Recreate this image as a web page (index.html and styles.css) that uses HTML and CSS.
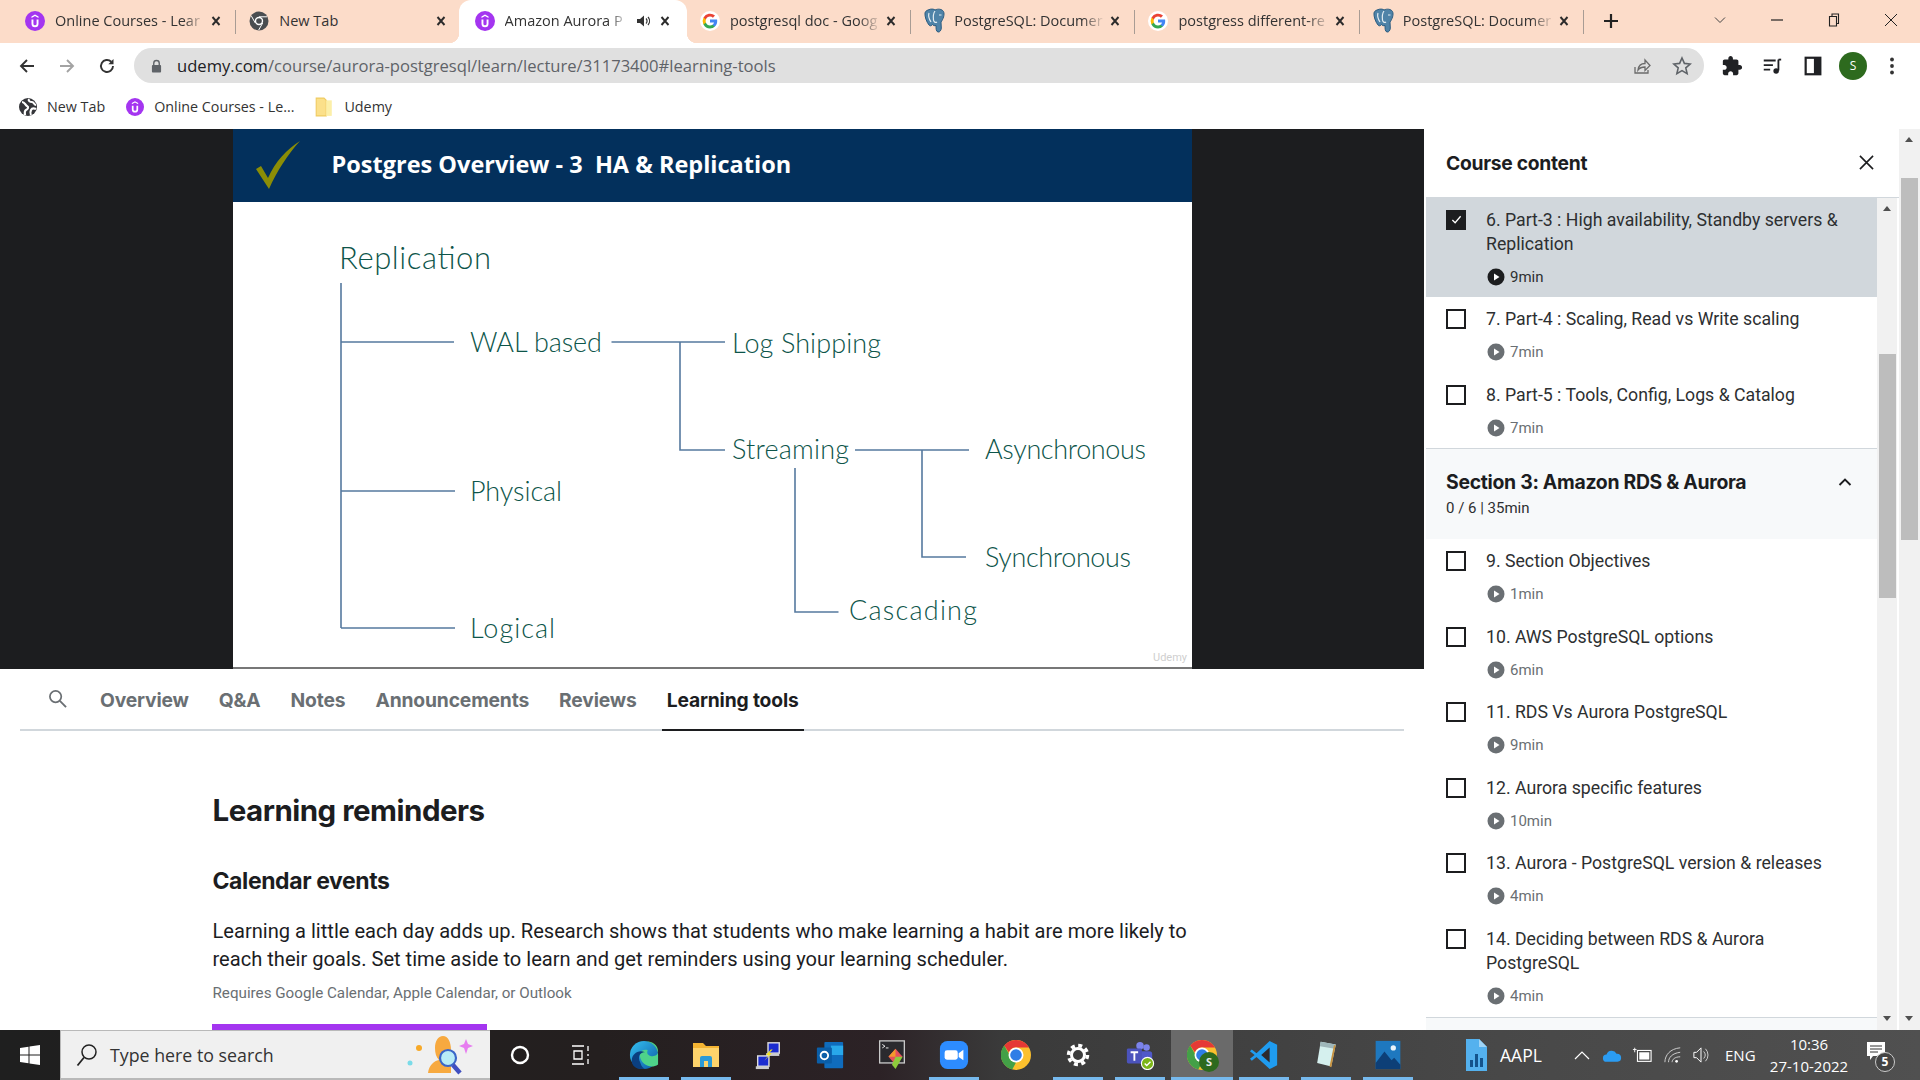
FILE: index.html
```html
<!DOCTYPE html>
<html lang="en">
<head>
<meta charset="utf-8">
<title>Amazon Aurora PostgreSQL</title>
<link rel="stylesheet" href="styles.css">
</head>
<body>
<svg class="sprites" width="0" height="0" aria-hidden="true">
  <symbol id="i-udemy" viewBox="0 0 20 20"><circle cx="10" cy="10" r="10" fill="#a435f0"/><path d="M6.500 8.500v4.200a3.500 3.500 0 0 0 7 0V8.500h-1.900v4.200a1.600 1.600 0 0 1-3.200 0V8.500z" fill="#fff"/><path d="M10 3.600l3.500 2v1.300L10 5 6.500 6.900V5.600z" fill="#fff"/></symbol>
  <symbol id="i-google" viewBox="0 0 20 20"><circle cx="10" cy="10" r="10" fill="#fff"/><path d="M17.200 10.200c0-.6-.05-1.100-.15-1.600H10v3h4a3.400 3.400 0 0 1-1.500 2.200v1.800h2.400c1.400-1.200 2.300-3.100 2.300-5.400z" fill="#4285f4"/><path d="M10 17.500c2 0 3.700-.65 4.900-1.900l-2.400-1.800c-.65.450-1.500.7-2.500.7-1.900 0-3.500-1.250-4.100-3H3.500v1.900A7.400 7.400 0 0 0 10 17.500z" fill="#34a853"/><path d="M5.900 11.500a4.400 4.400 0 0 1 0-3V6.600H3.500a7.400 7.400 0 0 0 0 6.800z" fill="#fbbc05"/><path d="M10 5.500c1.100 0 2.100.4 2.900 1.150l2.100-2.100A7.400 7.400 0 0 0 3.500 6.600l2.400 1.900c.6-1.750 2.200-3 4.100-3z" fill="#ea4335"/></symbol>
  <symbol id="i-pg" viewBox="0 0 22 26"><path d="M4 2c3-1.500 6-1 7 0 3-1.500 7-1 8.500 1.500 1.500 3-.5 8-2.500 10.500l.3 6c0 2-1.500 4.500-3.300 4-2-.5-2-3.500-2-6.500-1.500.5-3 0-3.500-1-1 1.500-2.500 1.800-3.500.5C2.500 14 .5 8 1 5c.2-1.400 1.500-2.500 3-3z" fill="#4f83a8" stroke="#2c5c80" stroke-width="1"/><path d="M11 3c-1.500 2-2 5-1.500 9 .2 2 2 3 3.500 2M15 7h2.500M5 5c-1 3 0 6 2 9" stroke="#e4edf2" stroke-width="1.200" fill="none"/></symbol>
  <symbol id="i-x" viewBox="0 0 10 10"><path d="M1.500 1l7 8M8.500 1l-7 8" stroke="#2b2b2b" stroke-width="1.900" fill="none"/></symbol>
  <symbol id="i-play" viewBox="0 0 18 18"><circle cx="9" cy="9" r="8.500" fill="currentColor"/><path d="M7 5.500l5.500 3.500L7 12.500z" fill="#fff"/></symbol>
  <symbol id="i-chrome" viewBox="0 0 32 32"><circle cx="16" cy="16" r="16" fill="#fbc02d"/><path d="M16 0a16 16 0 0 1 13.900 8H16a8 8 0 0 0-7.500 5.200L3.400 5.900A16 16 0 0 1 16 0z" fill="#e53935"/><path d="M3.400 5.900l6.900 11.900a6 6 0 0 0 5.700 6.200L12 31.500A16 16 0 0 1 3.400 5.900z" fill="#43a047"/><circle cx="16" cy="16" r="8" fill="#fff"/><circle cx="16" cy="16" r="6.200" fill="#2f7ee6"/></symbol>
</svg>

<div class="screen">
  <header class="tabstrip">
    <div class="tab"><svg class="fav"><use href="#i-udemy"/></svg><span class="tab-title">Online Courses - Lear</span><svg class="tab-x"><use href="#i-x"/></svg></div>
    <div class="tab tab-presep"><svg class="fav" viewBox="0 0 20 20"><circle cx="10" cy="10" r="9.500" fill="#4a4d50"/><circle cx="10" cy="10" r="4.200" fill="#fff"/><circle cx="10" cy="10" r="2.800" fill="#4a4d50"/><path d="M10 5.800h8M6.300 12l-3.900-6.900M13.700 12l-4 7" stroke="#fff" stroke-width="1"/></svg><span class="tab-title tab-title-full">New Tab</span><svg class="tab-x"><use href="#i-x"/></svg></div>
    <div class="tab tab-active"><svg class="fav"><use href="#i-udemy"/></svg><span class="tab-title">Amazon Aurora P</span><svg class="tab-audio" viewBox="0 0 14 12"><path d="M1 4h3l4-3.500v11L4 8H1z" fill="#333"/><path d="M10 3.500a3.500 3.500 0 0 1 0 5M12 2a6 6 0 0 1 0 8" stroke="#333" stroke-width="1.200" fill="none"/></svg><svg class="tab-x"><use href="#i-x"/></svg></div>
    <div class="tab"><svg class="fav"><use href="#i-google"/></svg><span class="tab-title">postgresql doc - Goog</span><svg class="tab-x"><use href="#i-x"/></svg></div>
    <div class="tab"><svg class="fav fav-pg"><use href="#i-pg"/></svg><span class="tab-title">PostgreSQL: Documer</span><svg class="tab-x"><use href="#i-x"/></svg></div>
    <div class="tab"><svg class="fav"><use href="#i-google"/></svg><span class="tab-title">postgress different-re</span><svg class="tab-x"><use href="#i-x"/></svg></div>
    <div class="tab"><svg class="fav fav-pg"><use href="#i-pg"/></svg><span class="tab-title">PostgreSQL: Documer</span><svg class="tab-x"><use href="#i-x"/></svg></div>
    <svg class="tab-new" viewBox="0 0 16 16"><path d="M8 1v14M1 8h14" stroke="#222" stroke-width="2.200"/></svg>
    <div class="win-controls">
      <svg class="win-icon" viewBox="0 0 14 14"><path d="M2 4.500l5 5 5-5" stroke="#444" fill="none"/></svg>
      <svg class="win-icon" viewBox="0 0 14 14"><path d="M1 7h12" stroke="#222" stroke-width="1.200"/></svg>
      <svg class="win-icon" viewBox="0 0 14 14"><path d="M2.500 3.500h7v9.500h-7zM5 3.500V1h6.500v9.500H9.500" stroke="#222" stroke-width="1.100" fill="none"/></svg>
      <svg class="win-icon" viewBox="0 0 14 14"><path d="M1 1l12 12M13 1L1 13" stroke="#222" stroke-width="1"/></svg>
    </div>
  </header>

  <div class="toolbar">
    <svg class="tool" viewBox="0 0 18 18"><path d="M16 9H3M9 3L3 9l6 6" stroke="#333" stroke-width="1.900" fill="none"/></svg>
    <svg class="tool" viewBox="0 0 18 18"><path d="M2 9h13M9 3l6 6-6 6" stroke="#a3a3a3" stroke-width="1.900" fill="none"/></svg>
    <svg class="tool" viewBox="0 0 18 18"><path d="M15 9a6 6 0 1 1-1.800-4.300" stroke="#333" stroke-width="1.900" fill="none"/><path d="M15.500 2v5.200h-5.200z" fill="#333"/></svg>
    <div class="omnibox">
      <svg class="lock" viewBox="0 0 12 14"><path d="M3 6V4a3 3 0 0 1 6 0v2" stroke="#5f6368" stroke-width="1.500" fill="none"/><rect x="1" y="6" width="10" height="8" rx="1" fill="#5f6368"/></svg>
      <span class="url"><b class="url-host">udemy.com</b>/course/aurora-postgresql/learn/lecture/31173400#learning-tools</span>
      <svg class="omni-icon" viewBox="0 0 20 20"><path d="M3 11v6h13v-3" stroke="#6b6b6b" stroke-width="1.300" fill="none"/><path d="M6 14c.5-4 3-6.500 7-6.500V4l5 5.500-5 5V11c-3 0-5.500 1-7 3z" stroke="#6b6b6b" stroke-width="1.300" fill="none"/></svg>
      <svg class="omni-icon" viewBox="0 0 20 20"><path d="M10 2l2.400 5.400 5.800.6-4.400 3.900 1.300 5.700-5.100-3-5.100 3 1.300-5.700L1.800 8l5.800-.6z" stroke="#5f6368" stroke-width="1.600" fill="none"/></svg>
    </div>
    <svg class="ext ext-first" viewBox="0 0 24 24"><path fill="#202124" d="M20.500 11H19V7c0-1.100-.9-2-2-2h-4V3.500C13 2.120 11.880 1 10.500 1S8 2.120 8 3.500V5H4c-1.100 0-1.990.9-1.990 2v3.800H3.500c1.490 0 2.700 1.210 2.700 2.700s-1.210 2.700-2.700 2.700H2V20c0 1.100.9 2 2 2h3.800v-1.500c0-1.490 1.210-2.700 2.700-2.700 1.490 0 2.700 1.210 2.700 2.700V22H17c1.100 0 2-.9 2-2v-4h1.500c1.380 0 2.500-1.120 2.500-2.500S21.880 11 20.500 11z"/></svg>
    <svg class="ext" viewBox="0 0 24 24"><path d="M3 6h13M3 11h10M3 16h7" stroke="#202124" stroke-width="2"/><path d="M19 5v12" stroke="#202124" stroke-width="2"/><circle cx="16.500" cy="17.500" r="3" fill="#202124"/><path d="M19 5h3" stroke="#202124" stroke-width="2"/></svg>
    <svg class="ext ext-panel" viewBox="0 0 24 24"><rect x="4" y="3" width="16" height="18" fill="none" stroke="#202124" stroke-width="2.400"/><rect x="13" y="3" width="7" height="18" fill="#202124"/></svg>
    <span class="avatar">S</span>
    <svg class="ext ext-dots" viewBox="0 0 6 20"><circle cx="3" cy="3.500" r="1.900" fill="#333"/><circle cx="3" cy="10" r="1.900" fill="#333"/><circle cx="3" cy="16.500" r="1.900" fill="#333"/></svg>
  </div>

  <nav class="bookmarks">
    <span class="bm"><svg class="bm-icon" viewBox="0 0 18 18"><circle cx="9" cy="9" r="9" fill="#35363a"/><path d="M3 4c3 0 3 3 5 4s1 3-1 4-1 4-1 5M10 1c-1 2 1 3 3 3s2 3 4 3M17 11c-2-1-4-1-5 1s-1 3 0 5" stroke="#fff" stroke-width="2.200" fill="none"/></svg>New Tab</span>
    <span class="bm"><svg class="bm-icon"><use href="#i-udemy"/></svg>Online Courses - Le...</span>
    <span class="bm"><svg class="bm-icon bm-folder" viewBox="0 0 16 18"><path d="M1 1h7l2 2v14H1z" fill="#fbe08a" stroke="#f0cb62"/><path d="M10 3h5v14h-5z" fill="#fcefa8"/></svg>Udemy</span>
  </nav>

  <main class="page">
    <div class="course">
      <section class="video">
        <div class="slide">
          <div class="slide-head">
            <svg class="slide-check" viewBox="0 0 46 50"><path d="M1 29l5-3 7 12C20 22 32 9 45 1 33 14 22 31 14 49z" fill="#8b8d06"/></svg>
            <h2 class="slide-title">Postgres Overview - 3&nbsp; HA &amp; Replication</h2>
          </div>
          <svg class="diagram" viewBox="233 202 959 465">
            <g class="tree">
              <path d="M341 283V628M341 342h113M341 491h114M341 628h114"/>
              <path d="M611.500 342H725M680 342V450H725"/>
              <path d="M855 450H969M922 450V557H966"/>
              <path d="M795 468V612H838.500"/>
            </g>
            <g class="labels">
              <text x="339" y="269" textLength="152" class="lbl-lg">Replication</text>
              <text x="470" y="352" textLength="132">WAL based</text>
              <text x="732" y="353" textLength="149">Log Shipping</text>
              <text x="732" y="459" textLength="117">Streaming</text>
              <text x="985" y="459" textLength="161">Asynchronous</text>
              <text x="470" y="501" textLength="92">Physical</text>
              <text x="985" y="567" textLength="146">Synchronous</text>
              <text x="849" y="620" textLength="128">Cascading</text>
              <text x="470" y="638" textLength="85">Logical</text>
            </g>
            <text x="1153" y="661" class="watermark">Udemy</text>
          </svg>
        </div>
      </section>

      <div class="tabs-nav">
        <svg class="nav-search" viewBox="0 0 20 20"><circle cx="8" cy="8" r="6" fill="none" stroke="#6a6f73" stroke-width="1.800"/><path d="M12.500 12.500L19 19" stroke="#6a6f73" stroke-width="2"/></svg>
        <span class="nav-tab">Overview</span>
        <span class="nav-tab">Q&amp;A</span>
        <span class="nav-tab">Notes</span>
        <span class="nav-tab">Announcements</span>
        <span class="nav-tab">Reviews</span>
        <span class="nav-tab nav-tab-active">Learning tools</span>
      </div>

      <article class="tools">
        <h1 class="tools-h1">Learning reminders</h1>
        <h3 class="tools-h3">Calendar events</h3>
        <p class="tools-p">Learning a little each day adds up. Research shows that students who make learning a habit are more likely to reach their goals. Set time aside to learn and get reminders using your learning scheduler.</p>
        <p class="tools-note">Requires Google Calendar, Apple Calendar, or Outlook</p>
        <div class="tools-btn"></div>
      </article>
    </div>

    <aside class="sidebar">
      <div class="side-head">
        <span class="side-title">Course content</span>
        <svg class="side-close" viewBox="0 0 16 16"><path d="M1 1l14 14M15 1L1 15" stroke="#1c1d1f" stroke-width="1.700"/></svg>
      </div>
      <div class="side-body">
        <div class="list">
          <div class="item item-current">
            <span class="box box-checked"><svg viewBox="0 0 12 12"><path d="M1.500 6.500l3 3 6-7" stroke="#fff" stroke-width="1.400" fill="none"/></svg></span>
            <div class="item-main"><div class="item-title">6. Part-3 : High availability, Standby servers &amp; Replication</div><div class="item-meta"><svg class="play"><use href="#i-play"/></svg>9min</div></div>
          </div>
          <div class="item"><span class="box"></span><div class="item-main"><div class="item-title">7. Part-4 : Scaling, Read vs Write scaling</div><div class="item-meta"><svg class="play"><use href="#i-play"/></svg>7min</div></div></div>
          <div class="item"><span class="box"></span><div class="item-main"><div class="item-title">8. Part-5 : Tools, Config, Logs &amp; Catalog</div><div class="item-meta"><svg class="play"><use href="#i-play"/></svg>7min</div></div></div>
          <div class="section">
            <div class="section-row"><span class="section-title">Section 3: Amazon RDS &amp; Aurora</span><svg class="section-chev" viewBox="0 0 14 10"><path d="M1.500 8L7 2.500 12.500 8" stroke="#1c1d1f" stroke-width="1.900" fill="none"/></svg></div>
            <div class="section-sub">0 / 6 | 35min</div>
          </div>
          <div class="item"><span class="box"></span><div class="item-main"><div class="item-title">9. Section Objectives</div><div class="item-meta"><svg class="play"><use href="#i-play"/></svg>1min</div></div></div>
          <div class="item"><span class="box"></span><div class="item-main"><div class="item-title">10. AWS PostgreSQL options</div><div class="item-meta"><svg class="play"><use href="#i-play"/></svg>6min</div></div></div>
          <div class="item"><span class="box"></span><div class="item-main"><div class="item-title">11. RDS Vs Aurora PostgreSQL</div><div class="item-meta"><svg class="play"><use href="#i-play"/></svg>9min</div></div></div>
          <div class="item"><span class="box"></span><div class="item-main"><div class="item-title">12. Aurora specific features</div><div class="item-meta"><svg class="play"><use href="#i-play"/></svg>10min</div></div></div>
          <div class="item"><span class="box"></span><div class="item-main"><div class="item-title">13. Aurora - PostgreSQL version &amp; releases</div><div class="item-meta"><svg class="play"><use href="#i-play"/></svg>4min</div></div></div>
          <div class="item"><span class="box"></span><div class="item-main"><div class="item-title">14. Deciding between RDS &amp; Aurora PostgreSQL</div><div class="item-meta"><svg class="play"><use href="#i-play"/></svg>4min</div></div></div>
          <div class="section section-stub"></div>
        </div>
        <div class="scroll scroll-inner">
          <span class="arrow arrow-up"></span>
          <span class="thumb thumb-inner"></span>
          <span class="arrow arrow-down"></span>
        </div>
      </div>
    </aside>

    <div class="scroll scroll-page">
      <span class="arrow arrow-up"></span>
      <span class="thumb thumb-page"></span>
      <span class="arrow arrow-down"></span>
    </div>
  </main>

  <footer class="taskbar">
    <div class="start"><svg viewBox="0 0 20 20" class="start-logo"><path d="M0 3l8.500-1.300v7.800H0zM9.500 1.500L20 0v9.500H9.500zM0 10.500h8.500v7.800L0 17zM9.500 10.500H20V20L9.500 18.500z" fill="#fff"/></svg></div>
    <div class="search">
      <svg class="search-mag" viewBox="0 0 22 24"><circle cx="13" cy="9" r="7" fill="none" stroke="#222" stroke-width="1.500"/><path d="M8 14.500L1.500 22.500" stroke="#222" stroke-width="1.700"/></svg>
      <span class="search-text">Type here to search</span>
      <svg class="search-art" viewBox="0 0 70 40"><circle cx="4" cy="28" r="2.500" fill="#7adbe8"/><circle cx="13" cy="13" r="3" fill="#f7a928"/><path d="M22 38c1-8 6-12 11-13-3-3-4-7-4-12 0-7 3-12 8-12s8 6 8 14v23z" fill="#f7a93f"/><circle cx="42" cy="23" r="8" fill="#b8ecf7" stroke="#3a66c8" stroke-width="2.200"/><path d="M47 30l7 8" stroke="#3f4fc0" stroke-width="4.500"/><path d="M60 4l2 5 5 2-5 2-2 6-2-6-5-2 5-2z" fill="#e77df0"/></svg>
    </div>
    <div class="slot slot-cortana"><svg class="task-icon" viewBox="0 0 24 24"><circle cx="12" cy="12" r="8" fill="none" stroke="#fff" stroke-width="2.400"/></svg></div>
    <div class="slot"><svg class="task-icon" viewBox="0 0 24 24"><path d="M2 3h12M2 21h12M4 8h8v8H4zM18 3v5M18 11v2M18 16v5" stroke="#fff" stroke-width="1.300" fill="none"/></svg></div>
    <div class="slot slot-open"><svg class="task-icon task-big" viewBox="0 0 32 32"><defs><linearGradient id="edge" x1="0" y1="0" x2="1" y2="1"><stop offset="0" stop-color="#35c1f1"/><stop offset="1" stop-color="#0c59a4"/></linearGradient></defs><circle cx="16" cy="16" r="15" fill="url(#edge)"/><path d="M31 16c0-8-7-15-15-15 9 0 15 4 15 11 0 4-4 6-8 5s-4-4-3-6c-5-2-10 2-8 8 2 8 12 12 19 7 0-1 0-7 0-10z" fill="#4ed38a"/><path d="M12 24c-3-5-1-11 5-11-7-3-14 2-14 9s8 11 14 8c-3 0-4-3-5-6z" fill="#0b3f7f"/></svg></div>
    <div class="slot slot-open"><svg class="task-icon task-big" viewBox="0 0 30 30"><path d="M2 3h10l3 3h13v21H2z" fill="#f4b432"/><rect x="2" y="8" width="26" height="19" fill="#fdd36b"/><path d="M9 27v-9a2 2 0 0 1 2-2h8a2 2 0 0 1 2 2v9h-4v-6h-4v6z" fill="#2b9ad6"/></svg></div>
    <div class="slot"><svg class="task-icon task-big" viewBox="0 0 30 32"><rect x="15" y="3" width="12" height="11" fill="#1b2cd0" stroke="#ddd" stroke-width="1.500"/><rect x="13" y="14" width="14" height="3" fill="#ccc"/><rect x="4" y="17" width="12" height="11" fill="#1b2cd0" stroke="#ddd" stroke-width="1.500"/><rect x="2" y="28" width="14" height="3" fill="#ccc"/><path d="M18 10l-5 6h3l-5 6 8-8h-3l4-4z" fill="#f6e71b"/></svg></div>
    <div class="slot"><svg class="task-icon task-big" viewBox="0 0 32 32"><rect x="10" y="2" width="20" height="28" rx="1" fill="#0f6cbd"/><rect x="17" y="6" width="13" height="10" fill="#28a8ea"/><rect x="2" y="8" width="16" height="17" rx="1" fill="#0a5ea8"/><circle cx="10" cy="16.500" r="4" fill="none" stroke="#fff" stroke-width="2"/></svg></div>
    <div class="slot"><svg class="task-icon task-big" viewBox="0 0 30 34"><rect x="1" y="1" width="28" height="25" fill="#2a2a2e" stroke="#c9c9c9" stroke-width="1.500"/><path d="M4 5l3 2-3 2M8 9h3" stroke="#fff" fill="none"/><path d="M19 10l8 9-8 9-8-9z" fill="#e8505b"/><path d="M19 19h8l-8 14-4-5z" fill="#8ecb3c"/><path d="M11 19l8-9v9z" fill="#f39a2c"/></svg></div>
    <div class="slot slot-open"><svg class="task-icon task-big" viewBox="0 0 32 32"><rect x="1" y="1" width="30" height="30" rx="8" fill="#2d8cff"/><rect x="6" y="11" width="14" height="10" rx="2.500" fill="#fff"/><path d="M21 14l5-3.500v11L21 18z" fill="#fff"/></svg></div>
    <div class="slot"><svg class="task-icon task-big"><use href="#i-chrome"/></svg></div>
    <div class="slot slot-open"><svg class="task-icon" viewBox="0 0 24 24"><circle cx="12" cy="12" r="6.500" fill="none" stroke="#fff" stroke-width="3"/><circle cx="12" cy="12" r="9.500" fill="none" stroke="#fff" stroke-width="3.500" stroke-dasharray="4 3.450"/></svg></div>
    <div class="slot slot-open"><svg class="task-icon task-big" viewBox="0 0 32 32"><circle cx="23" cy="8" r="3.500" fill="#7b83eb"/><circle cx="16" cy="6" r="4" fill="#7b83eb"/><rect x="15" y="12" width="14" height="13" rx="3" fill="#5059c9"/><rect x="2" y="9" width="16" height="16" rx="1.500" fill="#4b53bc"/><path d="M6 13h8M10 13v9" stroke="#fff" stroke-width="2"/><circle cx="24" cy="25" r="6.500" fill="#7cb518" stroke="#fff" stroke-width="1.200"/><path d="M21 25l2.200 2.200 4-4" stroke="#fff" stroke-width="1.500" fill="none"/></svg></div>
    <div class="slot slot-open slot-active"><svg class="task-icon task-big chrome-user"><use href="#i-chrome"/></svg><span class="chrome-badge">S</span></div>
    <div class="slot slot-open"><svg class="task-icon task-big" viewBox="0 0 32 32"><path d="M22 1l8 4v22l-8 4L8 18l-5 4-2-2 5-4-5-4 2-2 5 4z" fill="#1f9cf0"/><path d="M22 8v16l-9-8z" fill="#2d2a2e"/></svg></div>
    <div class="slot slot-open"><svg class="task-icon task-big" viewBox="0 0 30 34"><path d="M9 2l17 3-5 25-16-4z" fill="#d5f0ee"/><path d="M9 2l17 3-1 5-17-3z" fill="#9fb7ba"/><path d="M24 6h2l-5 25-2-1z" fill="#c8923e"/></svg></div>
    <div class="slot slot-open"><svg class="task-icon task-big" viewBox="0 0 30 34"><rect x="1" y="1" width="28" height="32" fill="#1e78bf"/><circle cx="21" cy="9" r="3" fill="#e8f4fb"/><path d="M1 26l10-13 8 10 3-3 7 8v5H1z" fill="#0d3f77"/></svg></div>
    <div class="tray">
      <svg class="tray-doc" viewBox="0 0 24 34"><path d="M2 1h13l8 8v24H2z" fill="#54b1ee"/><path d="M15 1l8 8h-8z" fill="#9fd4f6"/><path d="M6 29v-7h3v7zM11 29V16h3v13zM16 29v-9h3v9z" fill="#14538c"/></svg>
      <span class="tray-ticker">AAPL</span>
      <svg class="tray-caret" viewBox="0 0 16 10"><path d="M1 9l7-7 7 7" stroke="#fff" stroke-width="1.200" fill="none"/></svg>
      <svg class="tray-icon tray-cloud" viewBox="0 0 22 16"><path d="M5 15a4 4 0 0 1 0-8 6 6 0 0 1 11-1 4.500 4.500 0 0 1 1 9z" fill="#2b9cf2"/></svg>
      <svg class="tray-icon tray-batt" viewBox="0 0 22 18"><rect x="6" y="4" width="15" height="12" fill="none" stroke="#fff" stroke-width="1.200"/><rect x="8" y="6" width="11" height="8" fill="#fff"/><path d="M1 3h4M3 1v5" stroke="#fff"/></svg>
      <svg class="tray-icon tray-wifi" viewBox="0 0 20 18"><path d="M1 17C1 9 7 2 18 1M5 17c0-5 4-10 13-11M9 17c0-3 3-6 9-6" stroke="#ccc" stroke-width="1.100" fill="none"/><circle cx="14" cy="16" r="1.500" fill="#fff"/></svg>
      <svg class="tray-icon tray-speaker" viewBox="0 0 18 20"><path d="M1 7h3l5-5v16l-5-5H1z" fill="none" stroke="#fff" stroke-width="1.100"/><path d="M12 6a6 6 0 0 1 0 8M14 3a10 10 0 0 1 0 14" stroke="#ddd" fill="none"/></svg>
      <span class="tray-lang">ENG</span>
      <span class="clock"><span>10:36</span><span>27-10-2022</span></span>
      <span class="notify"><svg viewBox="0 0 20 20" class="notify-icon"><path d="M1 1h18v14H7l-3 4v-4H1z" fill="#fff"/><path d="M4 5h12M4 8h12M4 11h8" stroke="#333"/></svg><span class="notify-count">5</span></span>
    </div>
  </footer>
</div>
</body>
</html>
```

FILE: styles.css
```css
* { box-sizing: border-box; }
html, body { margin: 0; padding: 0; height: 100%; overflow: hidden; }
body { font-family: "Roboto", "Liberation Sans", sans-serif; color: #1c1d1f; background: #fff; }
.sprites { display: none; }
.screen { width: 1920px; height: 1080px; display: flex; flex-direction: column; overflow: hidden; }

/* Browser tabs */
.tabstrip { height: 43px; flex: none; display: flex; align-items: stretch; padding-left: 12px; background: #fcdcc9; }
.tab { position: relative; width: 224.3px; flex: none; display: flex; align-items: center; padding: 0 15px 2px 13px; }
.tab::after { content: ""; position: absolute; right: 0; top: 10px; height: 24px; width: 1px; background: #a89c94; }
.tab-presep::after, .tab-active::after { display: none; }
.tab-active { width: 228.3px; margin: 0 0 0 -2px; padding: 0 17px 2px 16px; background: #fff; border-radius: 12px 12px 0 0; z-index: 1; }
.tab-active::before { content: ""; position: absolute; left: -10px; right: -10px; bottom: 0; height: 10px; background:
  radial-gradient(circle at 0 0, #fcdcc9 10px, #fff 10.5px) left bottom / 10px 10px no-repeat,
  radial-gradient(circle at 100% 0, #fcdcc9 10px, #fff 10.5px) right bottom / 10px 10px no-repeat; z-index: -1; }
.fav { width: 20px; height: 20px; flex: none; margin-right: 10px; }
.fav-pg { width: 22px; height: 26px; margin: 0 8px 0 0; }
.tab-title { flex: 1; min-width: 0; white-space: nowrap; overflow: hidden; font: 14.5px "Open Sans", sans-serif; color: #333; -webkit-mask-image: linear-gradient(to right, #000 85%, transparent); mask-image: linear-gradient(to right, #000 85%, transparent); }
.tab-title-full { -webkit-mask-image: none; mask-image: none; }
.tab-x { width: 10px; height: 10px; flex: none; margin-left: 5px; }
.tab-audio { width: 14px; height: 12px; flex: none; margin-left: 8px; }
.tab-audio + .tab-x { margin-left: 10px; }
.tab-new { width: 16px; height: 16px; flex: none; margin: 13px 0 0 19px; }
.win-controls { margin-left: auto; display: flex; align-items: flex-start; padding-top: 13px; }
.win-icon { width: 14px; height: 14px; margin-left: 43px; }
.win-icon:first-child { margin-left: 0; }
.win-icon:last-child { margin-right: 22px; }

/* Toolbar */
.toolbar { height: 45px; flex: none; display: flex; align-items: center; padding-left: 18px; background: #fff; }
.tool { width: 18px; height: 18px; margin-right: 22px; flex: none; }
.tool:nth-child(3) { margin-right: 18px; }
.omnibox { width: 1570px; height: 35px; flex: none; display: flex; align-items: center; padding: 0 12px 0 17px; background: #e0e0e0; border-radius: 18px; }
.lock { width: 11px; height: 14px; flex: none; }
.url { margin-left: 15px; flex: 1; font: 16.6px "Open Sans", sans-serif; color: #5f6368; white-space: nowrap; }
.url-host { font-weight: 400; color: #202124; }
.omni-icon { width: 20px; height: 20px; margin-left: 20px; flex: none; }
.ext { width: 22px; height: 22px; flex: none; margin-left: 18px; }
.ext-first { margin-left: 17px; }
.ext-panel { margin-left: 19px; }
.avatar { width: 28px; height: 28px; margin-left: 15px; flex: none; border-radius: 50%; background: #2d6a1e; color: #fff; font: 12px/28px "Open Sans", sans-serif; text-align: center; }
.ext-dots { width: 6px; height: 20px; margin-left: 22px; }

/* Bookmarks */
.bookmarks { height: 41px; flex: none; display: flex; align-items: center; padding: 0 0 4px 19px; gap: 21px; background: #fff; }
.bm { display: flex; align-items: center; font: 14.3px "Open Sans", sans-serif; color: #333; white-space: nowrap; }
.bm-icon { width: 18px; height: 20px; margin-right: 10px; flex: none; }
.bm-folder { margin-right: 11px; }

/* Page */
.page { flex: 1; min-height: 0; display: flex; background: #fff; }
.course { width: 1424px; flex: none; display: flex; flex-direction: column; overflow: hidden; }
.video { height: 540px; flex: none; display: flex; justify-content: center; background: #1c1d1f; }
.slide { width: 959px; height: 540px; background: #fff; border-bottom: 2px solid #777; display: flex; flex-direction: column; }
.slide-head { height: 73px; flex: none; display: flex; align-items: center; background: #03305c; padding: 0 0 2px 22px; }
.slide-check { width: 46px; height: 50px; flex: none; }
.slide-title { margin: 0 0 2px 31px; font: 700 23.5px "Open Sans", sans-serif; color: #fff; white-space: nowrap; }
.diagram { width: 959px; height: 465px; display: block; }
.tree path { fill: none; stroke: #55799f; stroke-width: 1.6; }
.labels text { font: 300 27px "Lato", sans-serif; fill: #0d554a; }
.labels .lbl-lg { font-size: 31px; }
.watermark { font: 11px "Roboto", sans-serif; fill: #cfcfcf; }

.tabs-nav { height: 62px; flex: none; margin: 0 20px; display: flex; align-items: stretch; gap: 20px; border-bottom: 2px solid #d1d7dc; }
.nav-search { width: 19px; height: 19px; flex: none; margin: 20px 8px 0 28px; }
.nav-tab { display: flex; align-items: center; padding: 1px 5px 0; font: 700 19.3px "Inter", sans-serif; color: #6a6f73; white-space: nowrap; letter-spacing: -.17px; }
.nav-tab-active { color: #1c1d1f; border-bottom: 2px solid #1c1d1f; margin-bottom: -2px; }

.tools { padding: 60px 0 0 212.5px; width: 1200px; flex: 1; min-height: 0; }
.tools-h1 { margin: 0; font: 700 29.5px/38px "Inter", sans-serif; letter-spacing: -.5px; }
.tools-h3 { margin: 37px 0 0; font: 700 23px/30px "Inter", sans-serif; letter-spacing: -.4px; }
.tools-p { margin: 20.5px 0 0; max-width: 1000px; font: 400 20.1px/28px "Roboto", sans-serif; }
.tools-note { margin: 9px 0 0; font: 400 15.2px/22px "Roboto", sans-serif; color: #6a6f73; }
.tools-btn { margin: 20px 0 0 -.5px; width: 275px; height: 60px; background: #a435f0; }

/* Sidebar */
.sidebar { width: 475px; flex: none; display: flex; flex-direction: column; background: #fff; padding-left: 2px; }
.side-head { height: 68.6px; flex: none; display: flex; align-items: center; justify-content: space-between; padding: 0 25px 0 20px; border-bottom: 1px solid #d1d7dc; }
.side-title { font: 700 19.3px "Inter", sans-serif; letter-spacing: -.3px; }
.side-close { width: 15px; height: 15px; }
.side-body { flex: 1; min-height: 0; display: flex; padding-right: 2px; }
.list { flex: 1; min-width: 0; display: flex; flex-direction: column; }
.item { display: flex; flex: none; padding: 10px 36px 8.6px 20px; }
.item-current { background: #d1d7dc; }
.box { width: 20px; height: 20px; flex: none; margin: 2px 20px 0 0; border: 2px solid #1c1d1f; background: #fff; display: flex; align-items: center; justify-content: center; }
.box-checked { background: #1c1d1f; }
.box-checked svg { width: 11px; height: 11px; }
.item-main { flex: 1; min-width: 0; }
.item-title { font: 400 17.7px/24px "Roboto", sans-serif; color: #2d2f31; }
.item-meta { margin-top: 9px; height: 24px; display: flex; align-items: center; font: 400 15px "Roboto", sans-serif; color: #6a6f73; }
.item-current .item-meta { color: #2d2f31; }
.play { width: 18px; height: 18px; flex: none; margin: 0 5px 0 1px; color: #6a6f73; }
.item-current .play { color: #1c1d1f; }
.section { flex: none; height: 90.6px; background: #f7f9fa; border-top: 1px solid #d1d7dc; padding: 19.5px 25px 0 20px; }
.section-stub { flex: 1; }
.section-row { display: flex; align-items: center; justify-content: space-between; height: 26px; }
.section-title { font: 700 19.4px "Inter", sans-serif; letter-spacing: -.3px; }
.section-chev { width: 14px; height: 10px; }
.section-sub { margin-top: 3.5px; font: 400 15px/20px "Roboto", sans-serif; color: #2d2f31; }

.scroll { position: relative; flex: none; background: #f1f1f1; }
.scroll-inner { width: 20px; }
.scroll-page { width: 21px; }
.thumb { position: absolute; background: #bdbdbd; }
.thumb-inner { left: 2px; width: 17px; top: 156px; height: 244px; }
.thumb-page { left: 2px; width: 17px; top: 49px; height: 362px; }
.arrow { position: absolute; left: 50%; margin-left: -4.5px; width: 0; height: 0; border-left: 4.5px solid transparent; border-right: 4.5px solid transparent; }
.arrow-up { top: 8px; border-bottom: 5px solid #505050; }
.arrow-down { bottom: 9px; border-top: 5px solid #505050; }

/* Taskbar */
.taskbar { height: 50px; flex: none; display: flex; align-items: stretch; background: linear-gradient(to right, #1f1f1f 0, #241f1f 600px, #2c2226 880px, #3a3a3a 1000px, #484848 1500px, #505050 100%); }
.start { width: 60px; flex: none; display: flex; align-items: center; justify-content: center; }
.start-logo { width: 20px; height: 20px; }
.search { width: 430px; flex: none; display: flex; align-items: center; background: #f0f0f0; border: 1px solid #b9b9b9; border-width: 1px 0 2px 1px; padding-left: 15px; }
.search-mag { width: 22px; height: 24px; flex: none; }
.search-text { margin-left: 12px; font: 17.8px "Open Sans", sans-serif; color: #333; white-space: nowrap; }
.search-art { width: 70px; height: 40px; margin-left: auto; margin-right: 14px; flex: none; }
.slot { position: relative; width: 62px; flex: none; display: flex; align-items: center; justify-content: center; }
.slot-cortana { width: 61px; padding-right: 2px; }
.slot-open::after { content: ""; position: absolute; left: 6px; right: 6px; bottom: 0; height: 3px; background: #76b9ed; }
.slot-active { background: #6a6a6a; }
.slot-active::after { left: 0; right: 0; }
.task-icon { width: 24px; height: 24px; }
.task-big { width: 30px; height: 30px; }
.chrome-badge { position: absolute; left: 28px; top: 22px; width: 20px; height: 20px; border-radius: 50%; background: #2d6a1e; color: #e8e8e8; font: 700 11px/20px "Open Sans", sans-serif; text-align: center; }
.tray { flex: 1; display: flex; align-items: center; color: #fff; padding-left: 45px; }
.tray-doc { width: 24px; height: 34px; flex: none; }
.tray-ticker { margin-left: 12px; width: 44px; font: 17.5px "Open Sans", sans-serif; flex: none; }
.tray-caret { width: 16px; height: 10px; margin-left: 30px; flex: none; }
.tray-icon { flex: none; }
.tray-cloud { width: 20px; height: 15px; margin-left: 12px; }
.tray-batt { width: 20px; height: 18px; margin-left: 10px; }
.tray-wifi { width: 18px; height: 18px; margin-left: 12px; }
.tray-speaker { width: 16px; height: 20px; margin-left: 11px; }
.tray-lang { margin-left: 16px; width: 30px; font: 15px "Open Sans", sans-serif; flex: none; }
.clock { margin-left: 15px; width: 78px; flex: none; display: flex; flex-direction: column; align-items: center; gap: 6px; font: 15px/16px "Open Sans", sans-serif; white-space: nowrap; }
.notify { position: relative; margin-left: 18px; width: 24px; height: 34px; flex: none; }
.notify-icon { width: 20px; height: 20px; position: absolute; left: 0; top: 3px; }
.notify-count { position: absolute; left: 9px; top: 14px; width: 20px; height: 20px; border-radius: 50%; background: #444; border: 1px solid #ccc; font: 700 12px/18px "Open Sans", sans-serif; text-align: center; }
```
